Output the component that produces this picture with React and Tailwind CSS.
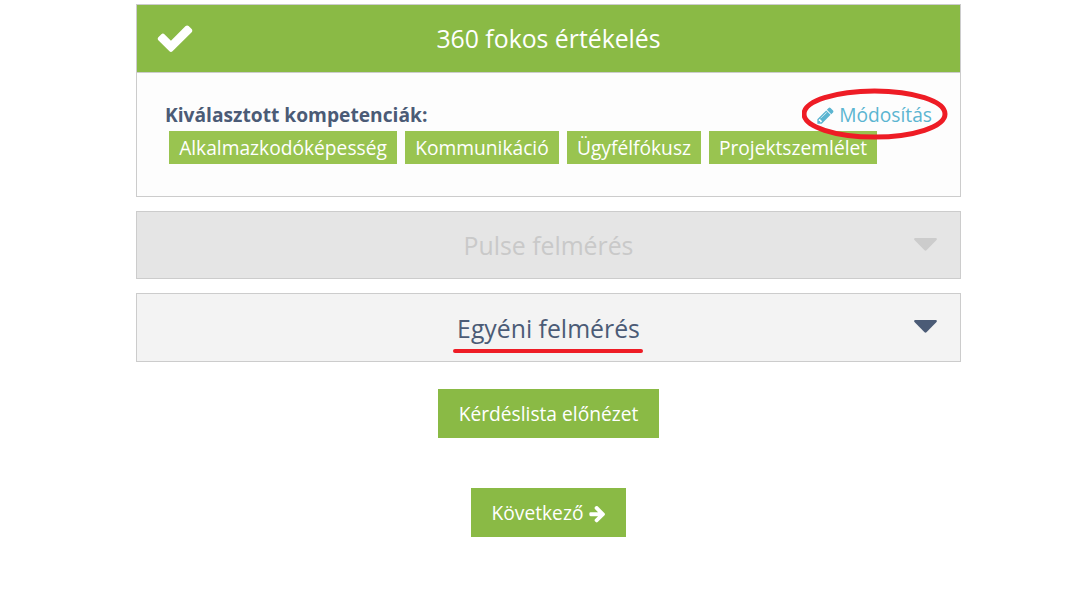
function Tag({ children }) {
  return (
    <span className="bg-[#99c450] text-white text-center text-[19.2px] leading-[33px] h-[33px]">
      {children}
    </span>
  );
}

function Caret({ color }) {
  return (
    <svg width="23" height="13" viewBox="0 0 24 14" preserveAspectRatio="none" className="absolute right-[23px] top-[26px]">
      <path d="M1.5 0h21c1.2 0 1.8 1.2 1 2.1L13 13.2c-.6.6-1.4.6-2 0L.5 2.1C-.3 1.2.3 0 1.5 0z" fill={color} />
    </svg>
  );
}

function Glyph({ d, size, className }) {
  return (
    <svg width={size} height={size} viewBox="0 0 1792 1792" fill="currentColor" className={className}>
      <path d={d} />
    </svg>
  );
}

const CHECK = "M1671 566q0 40-28 68l-724 724-136 136q-28 28-68 28t-68-28l-136-136-362-362q-28-28-28-68t28-68l136-136q28-28 68-28t68 28l294 295 656-657q28-28 68-28t68 28l136 136q28 28 28 68z";
const PENCIL = "M491 1536l91-91-235-235-91 91v107h128v128h107zm523-928q0-22-22-22-10 0-17 7l-542 542q-7 7-7 17 0 22 22 22 10 0 17-7l542-542q7-7 7-17zm-54-192l416 416-832 832H128v-416zm683 96q0 53-37 90l-166 166-416-416 166-165q36-38 90-38 53 0 91 38l235 234q37 39 37 91z";
const ARROW = "M1600 960q0 54-37 91l-651 651q-39 37-91 37-51 0-90-37l-75-75q-38-38-38-91t38-91l293-293H245q-52 0-84.5-37.5T128 1024V896q0-53 32.5-90.5T245 768h704L656 474q-38-36-38-90t38-90l75-75q38-38 90-38 53 0 91 38l651 651q37 35 37 91z";

function Collapsed({ title, className, caret, children }) {
  return (
    <div className={`relative border border-[#cccccc] flex items-center justify-center text-[24.8px] ${className}`}>
      <span className="relative pt-[2px]">
        {title}
        {children}
      </span>
      <Caret color={caret} />
    </div>
  );
}

function Button({ children, className }) {
  return (
    <button className={`h-[49px] pt-[2px] bg-[#8aba45] text-white text-[19.2px] flex items-center justify-center gap-[5px] ${className}`}>
      {children}
    </button>
  );
}

export default function App() {
  return (
    <div className="min-h-[596px] bg-white pt-1 font-['Open_Sans',sans-serif]">
      <div className="w-[825px] ml-[136px] flex flex-col">
        {/* 360 panel */}
        <div className="h-[193px] border border-[#cccccc] bg-[#fdfdfd]">
          <div className="relative h-[68px] bg-[#8aba45] flex items-center justify-center text-white text-[24.8px] border-b border-[#cccccc]">
            <Glyph d={CHECK} size={40} className="absolute left-[18px] top-[13px]" />
            360 fokos értékelés
          </div>
          <div className="relative pl-[28px] pr-[28px] pt-[29px]">
            <div className="text-[19.2px] font-bold leading-[26px] text-[#4b5b76]">
              Kiválasztott kompetenciák:
            </div>
            <div className="grid grid-cols-[228px_154px_134px_168px] gap-2 ml-[4px] mt-[3px]">
              <Tag>Alkalmazkodóképesség</Tag>
              <Tag>Kommunikáció</Tag>
              <Tag>Ügyfélfókusz</Tag>
              <Tag>Projektszemlélet</Tag>
            </div>
            <div className="absolute right-[28px] top-[29px] flex items-center gap-[4px] text-[19.2px] leading-[26px] text-[#5bb5d1]">
              <Glyph d={PENCIL} size={19} />
              Módosítás
            </div>
            {/* red marker ellipse */}
            <svg width="148" height="54" viewBox="0 0 148 54" className="absolute left-[665px] top-[15px]">
              <ellipse cx="72.5" cy="26" rx="70.5" ry="23" fill="none" stroke="#ee1c25" strokeWidth="5" />
            </svg>
          </div>
        </div>

        <Collapsed
          title="Pulse felmérés"
          className="mt-[14px] h-[68px] bg-[#e5e5e5] text-[#c9c9c9]"
          caret="#cccccc"
        />

        <Collapsed
          title="Egyéni felmérés"
          className="mt-[14px] h-[69px] bg-[#f3f3f3] text-[#4b5b76]"
          caret="#4b5b76"
        >
          {/* red marker underline */}
          <span className="absolute left-[-4px] right-[-3px] bottom-[-6px] h-1 rounded-full bg-[#ee1c25]" />
        </Collapsed>

        <Button className="mt-[27px] w-[221px] self-center">Kérdéslista előnézet</Button>
        <Button className="mt-[50px] w-[155px] pl-[2px] self-center">
          Következő
          <Glyph d={ARROW} size={19} />
        </Button>
      </div>
    </div>
  );
}
